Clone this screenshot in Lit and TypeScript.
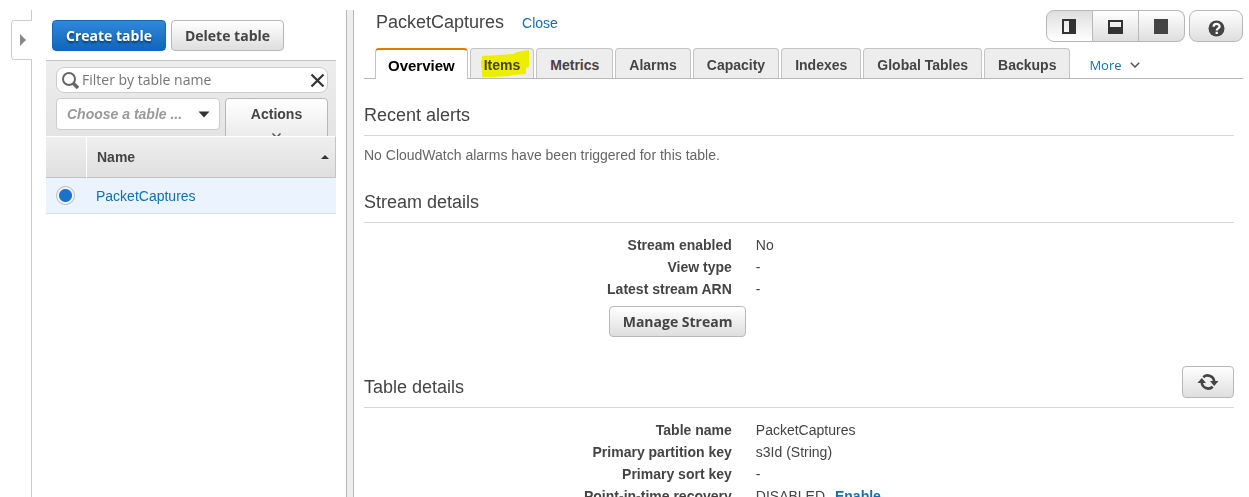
import { LitElement, html, svg, css } from "lit";
import { customElement, state } from "lit/decorators.js";

const TABS = ["Overview", "Items", "Metrics", "Alarms", "Capacity", "Indexes", "Global Tables", "Backups"];

const layoutIcons = [
  { name: "Split vertically", art: svg`<path d="M0 0h14v15H0zM2 2v11h5V2z" fill-rule="evenodd"/>` },
  { name: "Split horizontally", art: svg`<path d="M0 1h15v14H0zM2 3v5h11V3z" fill-rule="evenodd"/>` },
  { name: "Full view", art: svg`<path d="M0 0h14v15H0z"/>` },
];

@customElement("app-root")
export class AppRoot extends LitElement {
  @state() private tab = "Overview";
  @state() private layout = 0;

  static styles = css`
    :host {
      display: flex;
      height: 100vh;
      box-sizing: border-box;
      padding-top: 10px;
      overflow: hidden;
      background: #fff;
      color: #444;
      font: 14px/22px "Liberation Sans", Arial, sans-serif;
    }
    * { box-sizing: border-box; }
    button, input, select { font: inherit; color: inherit; margin: 0; }
    button { cursor: pointer; }
    svg { display: block; flex: none; }
    a { color: #146eb4; text-decoration: none; }
    h1, h2, p, dl, dd { margin: 0; font-weight: normal; }

    .rail { display: flex; flex-direction: column; flex: 0 0 32px; align-items: flex-end; }
    .rail-line { width: 1px; height: 10px; background: #ccc; }
    .rail-rest { width: 1px; flex: 1; background: #ccc; }
    .expand {
      width: 21px; height: 40px; padding: 0 0 0 8px;
      border: 1px solid #ccc; border-right: 0; border-radius: 4px 0 0 4px; background: #fff;
    }

    .btn {
      display: flex; align-items: center; justify-content: center;
      height: 31px; padding: 0 14px;
      border: 1px solid #b8b8b8; border-radius: 4px;
      background: linear-gradient(#fff, #dedede);
      font: bold 14px/20px "Noto Sans", "Open Sans", sans-serif;
      color: #444; white-space: nowrap;
    }
    .list-actions .btn, .manage .btn { font-family: "Open Sans", sans-serif; padding: 0 13px; }
    .primary {
      border-color: #1765b5; background: linear-gradient(#2f87dc, #1166bb);
      color: #fff; text-shadow: 0 2px 2px rgba(0, 0, 0, 0.5);
    }

    .list { flex: 0 0 290px; margin: 10px 10px 0 14px; }
    .list-actions { display: flex; gap: 5px; padding: 0 0 9px 6px; }
    .tools {
      height: 76px; padding: 6px 8px 0 10px; overflow: hidden;
      border-top: 1px solid #c4c4c4;
      background: linear-gradient(#ededed, #e4e4e4);
    }
    .filter {
      display: flex; align-items: center; gap: 2px;
      height: 26px; padding: 0 2px 0 4px;
      border: 1px solid #ccc; border-radius: 8px; background: #fff;
    }
    .filter input {
      flex: 1; min-width: 0; padding: 0; border: 0; outline: 0; background: none;
      font: 14px/20px "Open Sans", sans-serif; color: #444;
    }
    .filter input::placeholder { color: #757575; opacity: 1; }
    .clear { padding: 0; border: 0; background: none; }
    .tools-row { display: flex; gap: 5px; align-items: flex-start; padding-top: 5px; }
    .choose { display: grid; align-items: center; flex: 1; }
    .choose select {
      grid-area: 1 / 1; appearance: none; height: 32px; padding: 0 10px;
      border: 1px solid #ccc; border-radius: 4px; background: #fff;
      font: italic bold 14px/20px "Liberation Sans", Arial, sans-serif; color: #999;
    }
    .choose svg { grid-area: 1 / 1; justify-self: end; margin-right: 10px; pointer-events: none; }
    .actions {
      flex-direction: column; justify-content: flex-start; gap: 9px;
      flex: 0 0 103px; height: 54px; padding-top: 5px;
      background: linear-gradient(#fff, #e4e4e4);
      font: bold 14px/20px "Liberation Sans", Arial, sans-serif;
    }
    .tables { width: 100%; border-collapse: separate; border-spacing: 0; }
    .tables th {
      height: 42px; padding: 0; text-align: left; color: #444;
      border-top: 1px solid #fff; border-bottom: 1px solid #c4c4c4;
      background: linear-gradient(#efefef, #dfdfdf);
    }
    .tables th:first-child { width: 41px; border-right: 1px solid #fff; }
    .tables th:last-child { border-right: 1px solid #c4c4c4; }
    .sort { display: flex; align-items: center; justify-content: space-between; padding: 0 6px 0 10px; }
    .tables td { height: 36px; padding: 0 0 0 9px; border-bottom: 1px solid #ddd; background: #eaf3fe; }
    .radio {
      appearance: none; display: block; width: 19px; height: 19px; margin-left: 1px;
      border: 1px solid #bbb; border-radius: 50%;
      background: radial-gradient(circle, #1b72ca 6px, #f4f4f4 7px);
    }

    .divider {
      flex: 0 0 8px; border: 1px solid #b8b8b8; border-width: 0 1px; background: #eee;
    }

    .detail { flex: 1; min-width: 0; padding: 0 6px 0 10px; }
    .top { display: flex; align-items: flex-start; gap: 4px; height: 38px; padding-left: 12px; }
    .top h1 { font-size: 18px; line-height: 24px; margin-right: 14px; }
    .close { line-height: 26px; }
    .segments { display: flex; margin-left: auto; }
    .seg {
      width: 46px; height: 32px; border-left-width: 0; border-radius: 0; padding: 0;
      color: #333;
    }
    .seg:first-child { width: 47px; border-left-width: 1px; border-radius: 8px 0 0 8px; }
    .seg:last-child { border-radius: 0 8px 8px 0; }
    .seg.on { background: linear-gradient(#dedede, #fff); }
    .help { width: 54px; height: 32px; padding: 4px 0 0; border-radius: 8px; }

    .tabs { display: flex; gap: 2px; height: 31px; padding-left: 11px; border-bottom: 1px solid #b8b8b8; }
    .tab {
      position: relative; height: 30px; padding: 3px 13px 0;
      border: 1px solid #c4c4c4; border-bottom: 0; border-radius: 4px 4px 0 0;
      background: #ededed; font-weight: bold; line-height: 20px; white-space: nowrap;
    }
    .tab.on {
      height: 31px; padding: 2px 12px 0; background: #fff; color: #000; font-size: 15px;
      border-top: 2px solid #e07b00;
    }
    .mark { position: absolute; left: 10px; top: 1px; mix-blend-mode: multiply; }
    .more { display: flex; align-items: center; gap: 8px; margin-left: 17px; padding-top: 3px; font: 13px/20px "Open Sans", sans-serif; }

    .section { margin-right: 9px; }
    .head {
      display: flex; align-items: flex-end; justify-content: space-between;
      min-height: 57px; padding-bottom: 9px; border-bottom: 1px solid #d8d8d8;
    }
    .head h2 { font-size: 18px; }
    .note { padding-top: 8px; color: #666; }
    .facts { display: grid; grid-template-columns: 10fr 13fr; column-gap: 24px; padding-top: 11px; }
    .facts dt { text-align: right; font-weight: bold; }
    .enable { font-weight: bold; margin-left: 6px; }
    .manage { display: grid; grid-template-columns: 9fr 23fr; padding-top: 6px; }
    .manage .btn { grid-column: 2; justify-self: start; }
    .refresh { width: 52px; height: 32px; padding: 0; }
    .last { padding-top: 14px; }
  `;

  private fact(label: string, value: unknown) {
    return html`<dt>${label}</dt><dd>${value}</dd>`;
  }

  render() {
    return html`
      <div class="rail">
        <span class="rail-line"></span>
        <button class="expand" aria-label="Expand navigation">
          <svg width="6" height="12" fill="#888"><path d="M0 0l6 6-6 6z" /></svg>
        </button>
        <span class="rail-rest"></span>
      </div>

      <section class="list">
        <div class="list-actions">
          <button class="btn primary">Create table</button>
          <button class="btn">Delete table</button>
        </div>
        <div class="tools">
          <div class="filter">
            <svg width="19" height="18" viewBox="0 0 19 18" fill="none" stroke="#666">
              <circle cx="8" cy="8" r="6" stroke-width="2" /><path d="M12 12l5 5" stroke-width="3.4" />
            </svg>
            <input type="text" aria-label="Filter by table name" placeholder="Filter by table name" />
            <button class="clear" aria-label="Clear filter">
              <svg width="15" height="15" stroke="#333" stroke-width="2.2"><path d="M1.500 1.500l12 12M13.500 1.500l-12 12" /></svg>
            </button>
          </div>
          <div class="tools-row">
            <div class="choose">
              <select aria-label="Choose a table group"><option>Choose a table ...</option></select>
              <svg width="12" height="7" fill="#333"><path d="M0.500 0.500h11L6 6.500z" /></svg>
            </div>
            <button class="btn actions">
              Actions
              <svg width="9" height="6" fill="none" stroke="#555" stroke-width="1.500"><path d="M0.500 0.500l4 4 4-4" /></svg>
            </button>
          </div>
        </div>
        <table class="tables">
          <thead>
            <tr>
              <th></th>
              <th><span class="sort">Name <svg width="8" height="4" fill="#333"><path d="M0 4l4-4 4 4z" /></svg></span></th>
            </tr>
          </thead>
          <tbody>
            <tr>
              <td><input class="radio" type="radio" name="table" aria-label="PacketCaptures" checked /></td>
              <td><a href="#">PacketCaptures</a></td>
            </tr>
          </tbody>
        </table>
      </section>

      <div class="divider"></div>

      <main class="detail">
        <div class="top">
          <h1>PacketCaptures</h1>
          <a class="close" href="#">Close</a>
          <div class="segments">
            ${layoutIcons.map(
              (icon, i) => html`<button class="btn seg ${this.layout === i ? "on" : ""}" aria-label=${icon.name}
                @click=${() => (this.layout = i)}>
                <svg width="15" height="15" fill=${i === 2 ? "#444" : "#333"}>${icon.art}</svg>
              </button>`
            )}
          </div>
          <button class="btn help" aria-label="Help">
            <svg width="17" height="17" viewBox="0 0 17 17">
              <circle cx="8.500" cy="8.500" r="8" fill="#444" />
              <path d="M5.600 6.800C5.600 3 11.600 3 11.600 6.500C11.600 8.500 8.700 8.300 8.700 10.500M8.700 11.700v2.200" fill="none" stroke="#fff" stroke-width="2.200" />
            </svg>
          </button>
        </div>

        <nav class="tabs" role="tablist">
          ${TABS.map(
            (name) => html`<button class="tab ${this.tab === name ? "on" : ""}" role="tab"
              aria-selected=${this.tab === name ? "true" : "false"} @click=${() => (this.tab = name)}>${name}${name === "Items"
              ? html`<svg class="mark" width="49" height="28" fill="#ffff00"><path
                  d="M1 6L18 5 32 4 36 2 41 1 48 0V17L45 18V24L32 25 28 26 12 27H1V18L0 17V11L1 10z" /></svg>`
              : ""}</button>`
          )}
          <a class="more" href="#">More
            <svg width="10" height="6" fill="none" stroke="#555" stroke-width="1.500"><path d="M0.800 0.800L5 5l4.200-4.200" /></svg>
          </a>
        </nav>

        <section class="section">
          <div class="head"><h2>Recent alerts</h2></div>
          <p class="note">No CloudWatch alarms have been triggered for this table.</p>
        </section>

        <section class="section">
          <div class="head"><h2>Stream details</h2></div>
          <dl class="facts">
            ${this.fact("Stream enabled", "No")} ${this.fact("View type", "-")} ${this.fact("Latest stream ARN", "-")}
          </dl>
          <div class="manage"><button class="btn">Manage Stream</button></div>
        </section>

        <section class="section last">
          <div class="head">
            <h2>Table details</h2>
            <button class="btn refresh" aria-label="Refresh">
              <svg width="22" height="20" viewBox="0 0 22 20">
                <path d="M6.300 5.200A6.500 6.500 0 0 1 17.200 9.500M15.700 14.800A6.500 6.500 0 0 1 4.800 10.500" fill="none" stroke="#444" stroke-width="2.600" />
                <path d="M13 9h8.500l-4.300 5zM0.500 11H9L4.800 6z" fill="#444" />
              </svg>
            </button>
          </div>
          <dl class="facts">
            ${this.fact("Table name", "PacketCaptures")} ${this.fact("Primary partition key", "s3Id (String)")}
            ${this.fact("Primary sort key", "-")}
            ${this.fact("Point-in-time recovery", html`DISABLED <a class="enable" href="#">Enable</a>`)}
          </dl>
        </section>
      </main>
    `;
  }
}
